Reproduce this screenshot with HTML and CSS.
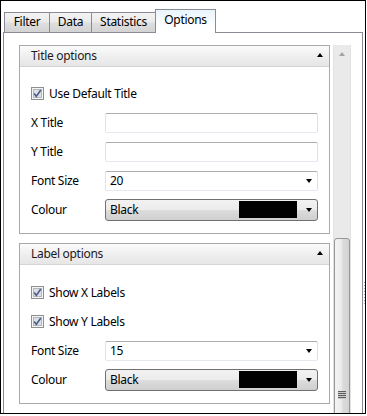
FILE: index.html
```html
<!DOCTYPE HTML>
<html>
    <head>
        <title>Chart Options</title>
        <meta charset="utf-8">
        <link rel="stylesheet" href="styles.css">
    </head>
    <body>
        <div class="window">
            <div class="tabs">
                <div class="tab tab-filter">Filter</div>
                <div class="tab tab-data">Data</div>
                <div class="tab tab-stats">Statistics</div>
                <div class="tab tab-options selected">Options</div>
            </div>
            <div class="pane">
                <div class="content">
                    <div class="group">
                        <div class="group-header">
                            <span class="group-title">Title options</span>
                            <span class="collapse-arrow"></span>
                        </div>
                        <div class="group-body">
                            <label class="check-row">
                                <svg class="checkbox" width="13" height="13" viewBox="0 0 13 13">
                                    <rect x="0.5" y="0.5" width="12" height="12" fill="#f4f4f4" stroke="#8e8f8f"/>
                                    <rect x="2.5" y="2.5" width="8" height="8" fill="#dde1e6" stroke="#b4b8be"/>
                                    <path d="M3.2 6.6 L5.3 9.4 L9.8 3" fill="none" stroke="#4b5f8c" stroke-width="1.7"/>
                                </svg>
                                <span>Use Default Title</span>
                            </label>
                            <span class="field-label">X Title</span>
                            <div class="textbox"></div>
                            <span class="field-label">Y Title</span>
                            <div class="textbox"></div>
                            <span class="field-label">Font Size</span>
                            <div class="textbox combo">
                                <span class="combo-text">20</span>
                                <span class="drop-arrow"></span>
                            </div>
                            <span class="field-label">Colour</span>
                            <div class="colour-combo">
                                <span class="combo-text">Black</span>
                                <span class="swatch"></span>
                                <span class="drop-arrow"></span>
                            </div>
                        </div>
                    </div>
                    <div class="group">
                        <div class="group-header">
                            <span class="group-title">Label options</span>
                            <span class="collapse-arrow"></span>
                        </div>
                        <div class="group-body group-body-labels">
                            <label class="check-row">
                                <svg class="checkbox" width="13" height="13" viewBox="0 0 13 13">
                                    <rect x="0.5" y="0.5" width="12" height="12" fill="#f4f4f4" stroke="#8e8f8f"/>
                                    <rect x="2.5" y="2.5" width="8" height="8" fill="#dde1e6" stroke="#b4b8be"/>
                                    <path d="M3.2 6.6 L5.3 9.4 L9.8 3" fill="none" stroke="#4b5f8c" stroke-width="1.7"/>
                                </svg>
                                <span>Show X Labels</span>
                            </label>
                            <label class="check-row">
                                <svg class="checkbox" width="13" height="13" viewBox="0 0 13 13">
                                    <rect x="0.5" y="0.5" width="12" height="12" fill="#f4f4f4" stroke="#8e8f8f"/>
                                    <rect x="2.5" y="2.5" width="8" height="8" fill="#dde1e6" stroke="#b4b8be"/>
                                    <path d="M3.2 6.6 L5.3 9.4 L9.8 3" fill="none" stroke="#4b5f8c" stroke-width="1.7"/>
                                </svg>
                                <span>Show Y Labels</span>
                            </label>
                            <span class="field-label">Font Size</span>
                            <div class="textbox combo">
                                <span class="combo-text">15</span>
                                <span class="drop-arrow"></span>
                            </div>
                            <span class="field-label">Colour</span>
                            <div class="colour-combo">
                                <span class="combo-text">Black</span>
                                <span class="swatch"></span>
                                <span class="drop-arrow"></span>
                            </div>
                        </div>
                    </div>
                </div>
                <div class="scrollbar">
                    <div class="scroll-up"><span class="scroll-up-arrow"></span></div>
                    <div class="thumb"><span class="gripper"></span></div>
                </div>
            </div>
            <div class="splitter-grip"></div>
        </div>
    </body>
</html>
```

FILE: styles.css
```css
*
{
    box-sizing: border-box;
}
body
{
    margin: 0px;
    padding: 0px;
    background: #fff;
    color: #000;
    font-family: "Noto Sans", "Open Sans", sans-serif;
    font-size: 12px;
    letter-spacing: -0.3px;
}
.window
{
    position: relative;
    width: 366px;
    height: 414px;
    border: 1px solid #000;
    display: flex;
    flex-direction: column;
    overflow: hidden;
}

/* tab strip */
.tabs
{
    display: flex;
    align-items: flex-end;
    height: 23px;
    margin: 8px 0 0 3px;
    flex: none;
}
.tab
{
    height: 20px;
    border: 1px solid #898c95;
    border-bottom: none;
    margin-left: -1px;
    display: flex;
    align-items: center;
    justify-content: center;
    line-height: 16px;
    padding-bottom: 1px;
    background: linear-gradient(#f3f3f3, #ebebeb 45%, #dedede 55%, #d3d3d3);
}
.tab-filter { width: 46px; margin-left: 0; }
.tab-data { width: 43px; }
.tab-stats { width: 65px; }
.tab-options { width: 61px; }
.tab.selected
{
    position: relative;
    z-index: 1;
    height: 24px;
    margin-bottom: -1px;
    padding-bottom: 3px;
    background: linear-gradient(#e9f5fc, #fbfdfe 60%, #fff);
}

/* tab page */
.pane
{
    flex: 1;
    min-height: 0;
    margin: 0 2px;
    border: 1px solid #898c95;
    border-bottom: none;
    background: #fff;
    display: flex;
    gap: 3px;
    padding: 12px 11px 0 15px;
}
.content
{
    width: 311px;
    flex: none;
    display: flex;
    flex-direction: column;
    gap: 9px;
}
.group
{
    border: 1px solid #a9a9a9;
}
.group-header
{
    height: 21px;
    border-bottom: 1px solid #d4d4d4;
    background: linear-gradient(#fbfbfb, #ededed 60%, #e6e6e6);
    display: flex;
    align-items: center;
    justify-content: space-between;
    padding: 0 6px 1px 11px;
}
.group-title
{
    color: #221a1a;
}
.collapse-arrow
{
    width: 0;
    height: 0;
    border-left: 3.5px solid transparent;
    border-right: 3.5px solid transparent;
    border-bottom: 4px solid #000;
    margin-bottom: 1px;
}
.group-body
{
    display: grid;
    grid-template-columns: 74px 1fr;
    grid-auto-rows: 29px;
    align-items: center;
    padding: 12px 11px 9px 11px;
}
.group-body-labels
{
    padding-top: 13px;
}
.check-row
{
    grid-column: 1 / 3;
    display: flex;
    align-items: center;
    gap: 5px;
}
.checkbox
{
    display: block;
    flex: none;
}
.field-label
{
    padding-bottom: 1px;
}

/* inputs */
.textbox
{
    height: 20px;
    border: 1px solid;
    border-color: #abadb3 #dbdfe6 #e3e9ef #e2e3ea;
    border-radius: 2px;
    background: #fff;
}
.combo
{
    display: flex;
    align-items: center;
    padding: 0 4px 0 4px;
}
.combo-text
{
    flex: 1;
    padding-bottom: 1px;
}
.drop-arrow
{
    width: 0;
    height: 0;
    border-left: 3px solid transparent;
    border-right: 3px solid transparent;
    border-top: 4px solid #000;
    margin-right: 1px;
}
.colour-combo
{
    height: 22px;
    border: 1px solid #707070;
    border-radius: 3px;
    background: linear-gradient(#f2f2f2, #ebebeb 50%, #dddddd 50%, #cfcfcf);
    display: flex;
    align-items: center;
    padding: 0 4px 0 4px;
}
.swatch
{
    width: 58px;
    height: 17px;
    background: #000;
    margin-right: 9px;
}

/* scroll bar */
.scrollbar
{
    width: 18px;
    flex: none;
    background: #eaeaea;
    border-left: 1px solid #e2e2e2;
    border-right: 1px solid #e2e2e2;
    display: flex;
    flex-direction: column;
    align-items: center;
}
.scroll-up
{
    height: 17px;
    width: 100%;
    display: flex;
    align-items: center;
    justify-content: center;
    flex: none;
}
.scroll-up-arrow
{
    width: 0;
    height: 0;
    border-left: 3.5px solid transparent;
    border-right: 3.5px solid transparent;
    border-bottom: 4px solid #a3a3a3;
}
.thumb
{
    width: 16px;
    height: 340px;
    flex: none;
    margin-top: 176px;
    border: 1px solid #979797;
    border-radius: 3px 3px 0 0;
    background: linear-gradient(to right, #f4f4f4, #ebebeb 45%, #dcdcdc 55%, #d2d2d2);
    display: flex;
    justify-content: center;
    padding-top: 152px;
}
.gripper
{
    width: 8px;
    height: 8px;
    background: repeating-linear-gradient(#5e5e5e 0 1px, #c9c9c9 1px 2px);
}
.splitter-grip
{
    position: absolute;
    right: 0;
    top: 281px;
    width: 1px;
    height: 24px;
    background: repeating-linear-gradient(#a0a0a0 0 1px, transparent 1px 3px);
}
```
